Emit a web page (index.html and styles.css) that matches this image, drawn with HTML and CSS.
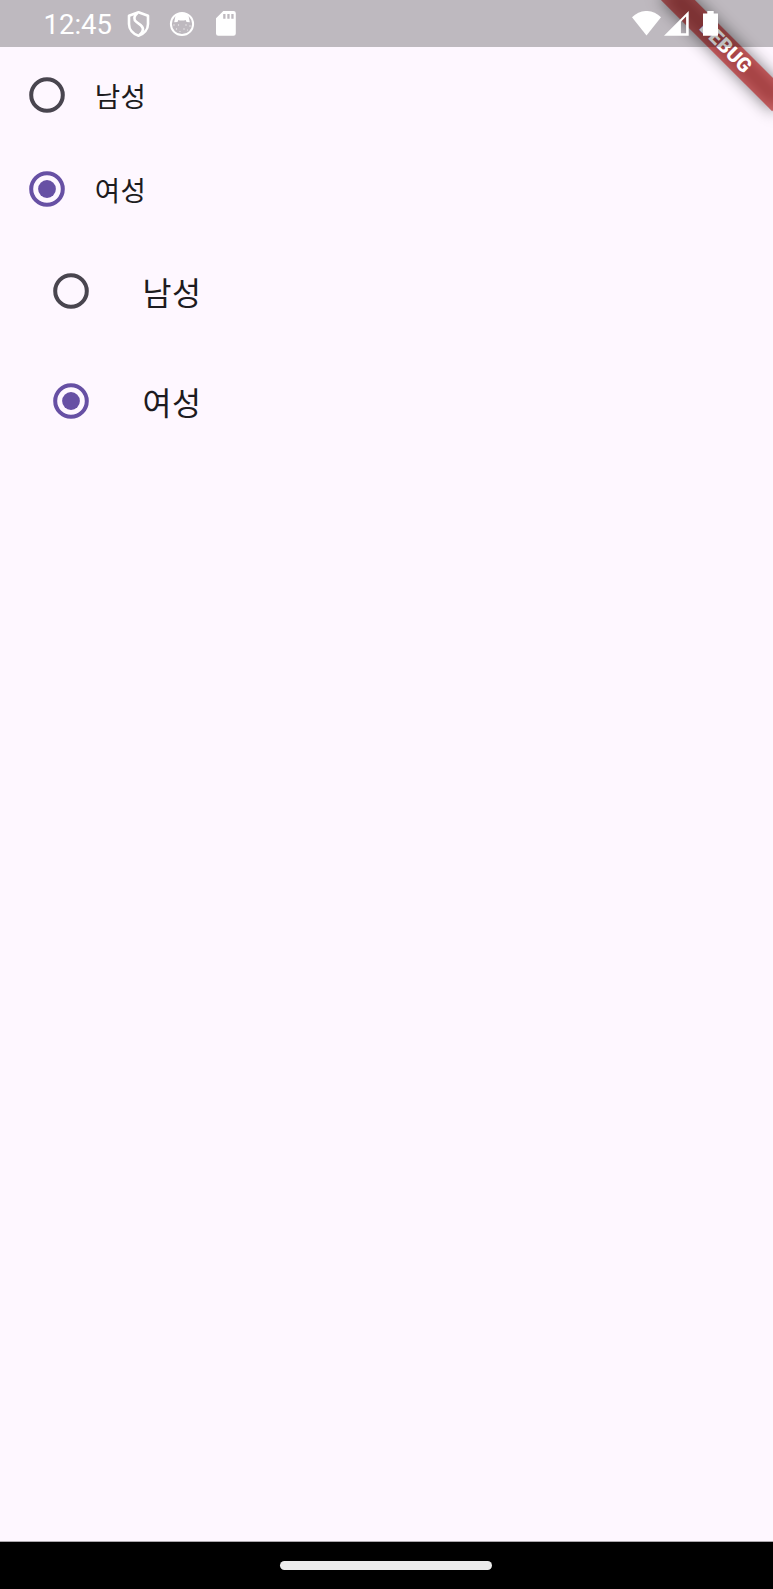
FILE: index.html
```
<!DOCTYPE html>
<html lang="ko">
<head>
    <meta charset="UTF-8">
    <title>Radio</title>
    <link rel="stylesheet" href="styles.css">
</head>
<body>

<!-- Debug ribbon -->
<div class="ribbon-area">
    <div class="ribbon"><span>DEBUG</span></div>
</div>

<!-- Status bar -->
<header class="status-bar">
    <span class="time">12:45</span>
    <svg class="shield" width="24" height="28" viewBox="0 0 24 28" fill="none" stroke="#fff" stroke-width="2.600" stroke-linejoin="round">
        <path d="M12.500 2.300 22 5.800v8.200c0 5.300-3.800 9.900-9.500 11.700C6.800 23.900 3 19.300 3 14V5.800z"/>
        <path d="M11.500 3C7.500 6 7.500 9.800 10.500 12l4.500 3.400c3.200 2.800 2.300 6.500-1.500 9.600"/>
    </svg>
    <svg class="face" width="26" height="26" viewBox="0 0 26 26">
        <circle cx="13" cy="13" r="11.100" fill="none" stroke="#fff" stroke-width="2"/>
        <path d="M6.500 4.500C9 1.800 17 1.800 19.500 4.500l1.300 6.800-3.300-.3-.8-2c-2 .8-5.400.8-7.400 0l-.8 2-3.300.3z" fill="#fff"/>
        <g fill="#fff" opacity=".7">
            <circle cx="5" cy="14" r=".7"/><circle cx="9.500" cy="14" r=".7"/><circle cx="17" cy="14" r=".7"/>
            <circle cx="21" cy="15" r=".7"/><circle cx="7.500" cy="18" r=".7"/>
            <circle cx="11" cy="20.500" r=".6"/><circle cx="15" cy="18" r=".7"/><circle cx="18.500" cy="19" r=".6"/>
        </g>
    </svg>
    <svg class="card" width="20" height="25" viewBox="0 0 20 25">
        <path fill="#fff" fill-rule="evenodd" d="M7.300 0H17.500A2.300 2.300 0 0 1 19.800 2.300V22.500A2.300 2.300 0 0 1 17.500 24.800H2.300A2.300 2.300 0 0 1 0 22.500V7.300zM7.200 3v4.700h2.300V3zm4.100 0v4.700h2.300V3zm4 0v4.700h2.300V3z"/>
    </svg>
    <svg class="wifi" width="29" height="25" viewBox="0 0 30 25" preserveAspectRatio="none">
        <path d="M0 6.200C8.500-2.100 21.500-2.100 30 6.200L15 24.600z" fill="#fff"/>
    </svg>
    <svg class="signal" width="25" height="25" viewBox="0 0 25 25">
        <path fill="#fff" fill-rule="evenodd" d="M0 24.700 24.700 0V24.700zM16.900 10.800V22.300h5.200V5.600z"/>
    </svg>
    <svg class="battery" width="15" height="25" viewBox="0 0 15 25">
        <path d="M4.300 0h6.400v2.500H15v22.200H0V2.500h4.300z" fill="#fff"/>
    </svg>
</header>

<main>
    <div class="row">
        <svg class="radio" viewBox="0 0 36 36"><circle class="ring" cx="18" cy="18" r="15.800"/></svg>
        <span>남성</span>
    </div>
    <div class="row">
        <svg class="radio selected" viewBox="0 0 36 36"><circle class="ring" cx="18" cy="18" r="15.800"/><circle class="dot" cx="18" cy="18" r="8.900"/></svg>
        <span>여성</span>
    </div>
    <div class="tile">
        <svg class="radio" viewBox="0 0 36 36"><circle class="ring" cx="18" cy="18" r="15.800"/></svg>
        <span>남성</span>
    </div>
    <div class="tile">
        <svg class="radio selected" viewBox="0 0 36 36"><circle class="ring" cx="18" cy="18" r="15.800"/><circle class="dot" cx="18" cy="18" r="8.900"/></svg>
        <span>여성</span>
    </div>
</main>

<footer class="nav-bar">
    <div class="handle"></div>
</footer>

</body>
</html>
```
FILE: styles.css
```
body {
    margin: 0;
    height: 1589px;
    display: flex;
    flex-direction: column;
    overflow: hidden;
    background-color: #fef7ff;
    color: #1d1b20;
    font-family: Roboto, "Noto Sans CJK KR", sans-serif;
}

/* Status bar */
.status-bar {
    position: relative;
    display: flex;
    height: 36px;
    padding: 11px 55px 0 43.5px;
    background-color: rgba(0, 0, 0, 0.25);
}
.time {
    width: 82.5px;
    color: #fff;
    font-size: 27.5px;
    line-height: 28px;
}
.shield {
    margin-top: -1px;
}
.face {
    margin-left: 19px;
}
.card {
    margin-left: 21px;
}
.wifi {
    margin-left: auto;
}
.signal {
    margin-left: 3px;
}
.battery {
    margin-left: 14px;
}

/* Debug ribbon, laid over the top right corner */
.ribbon-area {
    position: absolute;
    top: 0;
    right: 0;
    width: 200px;
    height: 200px;
    overflow: hidden;
}
.ribbon {
    position: absolute;
    top: 55.1px;
    left: 121.3px;
    width: 157.4px;
    height: 23.6px;
    transform: rotate(45deg);
    transform-origin: 78.7px -55.1px;
    color: #fff;
    font-size: 20px;
    font-weight: 900;
    line-height: 23.6px;
    text-align: center;
}
.ribbon::before,
.ribbon::after {
    content: "";
    position: absolute;
    inset: 0;
}
.ribbon::before {
    background-color: rgba(0, 0, 0, 0.5);
    filter: blur(7.8px);
}
.ribbon::after {
    background-color: rgba(183, 28, 28, 0.63);
}
.ribbon span {
    position: relative;
    z-index: 1;
}

/* Radio rows */
main {
    flex: 1;
    padding-top: 0.5px;
}
.row,
.tile {
    display: flex;
    align-items: center;
}
.row {
    height: 94.2px;
    padding-left: 29.2px;
    font-size: 27.6px;
    letter-spacing: 0.5px;
}
.tile {
    height: 110px;
    padding-left: 53px;
    font-size: 31.5px;
    letter-spacing: 0.5px;
}
.radio {
    width: 36px;
    height: 36px;
    margin-right: 29.5px;
}
.tile .radio {
    margin-right: 53.5px;
}
.ring {
    fill: none;
    stroke: #49454f;
    stroke-width: 4;
}
.selected .ring {
    stroke: #6750a4;
}
.dot {
    fill: #6750a4;
}

/* Navigation bar */
.nav-bar {
    display: flex;
    align-items: center;
    justify-content: center;
    height: 47px;
    border-top: 1px solid #aca8ad;
    background-color: #000;
}
.handle {
    width: 212px;
    height: 8.5px;
    margin-right: 1px;
    border-radius: 5px;
    background-color: #ececec;
}
```
